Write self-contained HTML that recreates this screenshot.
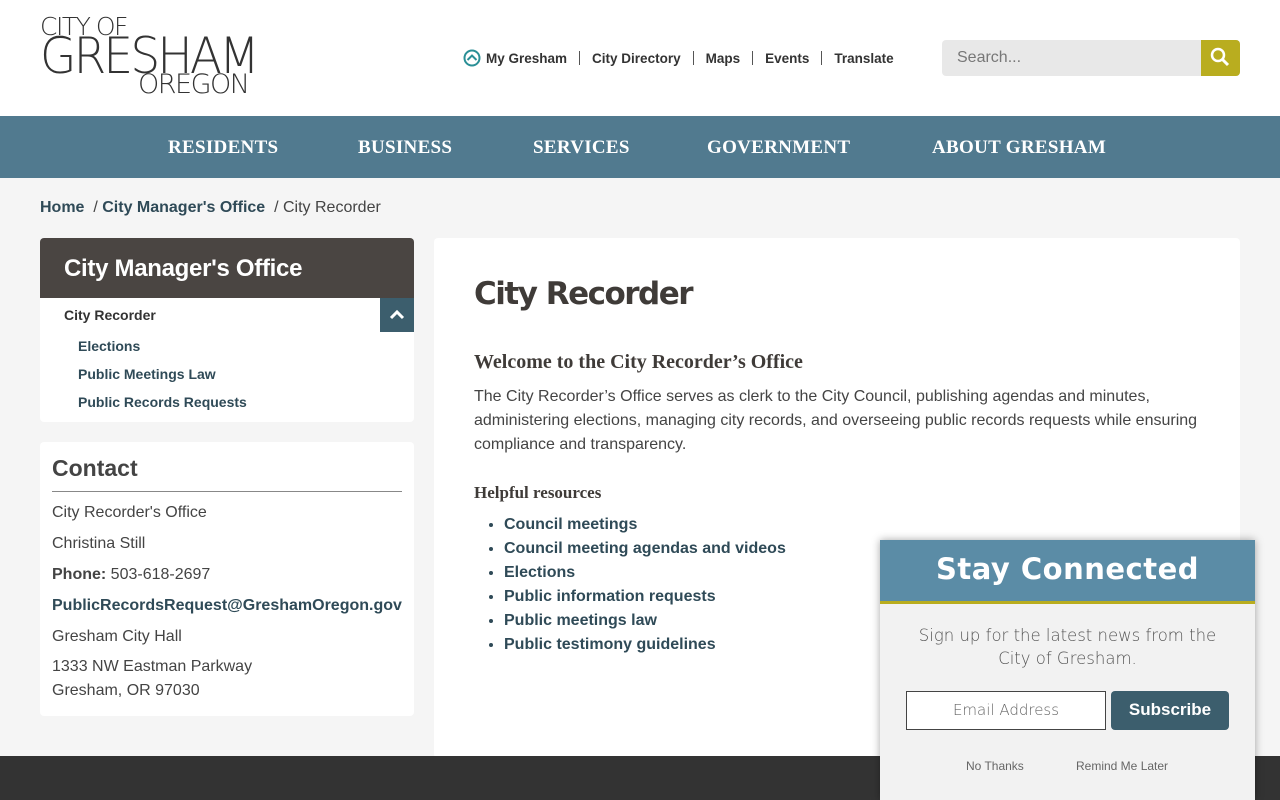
<!DOCTYPE html>
<html><head><meta charset="utf-8"><style>
*{box-sizing:border-box;margin:0;padding:0}
body{width:1280px;height:800px;overflow:hidden;background:#f5f5f5;font-family:"Liberation Sans",Arial,sans-serif;position:relative}
.hdr{position:absolute;left:0;top:0;width:1280px;height:116px;background:#fff}
.logo{position:absolute;left:40px;top:14px;color:#333;font-family:"DejaVu Sans",sans-serif;font-weight:200;line-height:1}
.util{position:absolute;top:49px;left:463px;font-size:13.5px;font-weight:bold;color:#333;display:flex;align-items:center}
.util span.sep{display:inline-block;width:1px;height:14px;background:#555;margin:0 12px}
.search{position:absolute;left:942px;top:40px;width:298px;height:36px;background:#e8e8e8;border-radius:4px;overflow:hidden}
.search span{position:absolute;left:15px;top:9px;font-size:16px;color:#777}
.search .btn{position:absolute;right:0;top:0;width:39px;height:36px;background:#b9ad1f}
.nav{position:absolute;top:116px;left:0;width:1280px;height:62px;background:#517a8f}
.nav a{position:absolute;top:21px;color:#fff;font-family:"Liberation Serif",serif;font-weight:bold;font-size:19px;letter-spacing:.3px}
.bc{position:absolute;top:199px;left:40px;font-size:16px;color:#444}
.bc b{color:#2f4a57}
.side{position:absolute;left:40px;top:238px;width:374px;height:184px;background:#fff;border-radius:4px;overflow:hidden}
.side .t{height:60px;background:#4a4542;color:#fff;font-size:24px;font-weight:bold;padding:17px 24px;font-family:"Liberation Sans",sans-serif;letter-spacing:-.3px}
.side .tog{position:absolute;right:0;top:60px;width:34px;height:34px;background:#3c5e6d}
.side p{position:absolute;font-size:14px;font-weight:bold;color:#2f4a57}
.contact{position:absolute;left:40px;top:442px;width:374px;height:274px;background:#fff;border-radius:4px;padding:0 12px}
.contact h3{font-family:"Liberation Sans",sans-serif;font-size:23px;color:#444;padding-top:13px;padding-bottom:9px;border-bottom:1px solid #888}
.contact p{position:absolute;left:12px;font-size:16px;color:#444}
.main{position:absolute;left:434px;top:238px;width:806px;height:520px;background:#fff;border-radius:4px}
.main h1{position:absolute;left:40px;top:38px;font-family:"DejaVu Sans",sans-serif;font-size:31px;font-weight:bold;color:#3f3b38;letter-spacing:-1.5px}
.main h2{position:absolute;left:40px;top:113px;font-family:"Liberation Serif",serif;font-size:20px;font-weight:bold;color:#3f3b38}
.main .p{position:absolute;left:40px;top:147px;width:740px;font-size:16px;line-height:24px;color:#444}
.main h4{position:absolute;left:40px;top:245px;font-family:"Liberation Serif",serif;font-size:17px;font-weight:bold;color:#3f3b38}
.main ul{position:absolute;left:70px;top:275px;font-size:16px;font-weight:bold;color:#2f4a57;line-height:24px}
.foot{position:absolute;top:756px;left:0;width:1280px;height:44px;background:#333}
.pop{position:absolute;left:880px;top:540px;width:375px;height:260px;background:#f2f2f2;box-shadow:0 0 8px rgba(0,0,0,.35)}
.pop .h{height:64px;background:#5b8ca6;border-bottom:3px solid #b9ad1f;color:#fff;text-align:center;font-family:"DejaVu Sans",sans-serif;font-weight:bold;font-size:29px;padding-top:12px;letter-spacing:.5px}
.pop .s{position:absolute;top:84px;left:0;width:375px;text-align:center;font-family:"DejaVu Sans",sans-serif;font-weight:200;font-size:16.5px;color:#555;line-height:23px;padding:0 22px}
.pop .e{position:absolute;left:26px;top:151px;width:200px;height:39px;background:#fff;border:1px solid #444;text-align:center;font-size:15px;color:#666;padding-top:9px;font-family:"DejaVu Sans",sans-serif;font-weight:200}
.pop .b{position:absolute;left:231px;top:151px;width:118px;height:39px;background:#3c5e6d;border-radius:4px;color:#fff;font-weight:bold;font-size:17px;text-align:center;padding-top:9px;font-family:"Liberation Sans",sans-serif}
.pop .l{position:absolute;top:219px;font-size:12px;color:#666}
</style></head><body>
<div class="hdr">
<div class="logo"><div style="font-size:25px;letter-spacing:-1.5px">CITY OF</div><div style="font-size:50px;letter-spacing:-3px;margin-top:-8px;transform:scaleX(.94);transform-origin:left">GRESHAM</div><div style="font-size:27px;margin-left:98px;margin-top:-10px;letter-spacing:-1.5px">OREGON</div></div>
<div class="util"><svg width="18" height="18" viewBox="0 0 18 18" style="margin-right:5px"><circle cx="9" cy="9" r="7.5" fill="none" stroke="#2a8f96" stroke-width="2"/><path d="M4.5 11 9 6.5 13.5 11" fill="none" stroke="#2a8f96" stroke-width="2"/></svg>My Gresham<span class="sep"></span>City Directory<span class="sep"></span>Maps<span class="sep"></span>Events<span class="sep"></span>Translate</div>
<div class="search"><span>Search...</span><div class="btn"><svg width="39" height="36" viewBox="0 0 39 36"><circle cx="17" cy="15" r="6" fill="none" stroke="#fff" stroke-width="2.5"/><path d="M21.5 19.5 27 25" stroke="#fff" stroke-width="3"/></svg></div></div>
</div>
<div class="nav"><a style="left:168px">RESIDENTS</a><a style="left:358px">BUSINESS</a><a style="left:533px">SERVICES</a><a style="left:707px">GOVERNMENT</a><a style="left:932px">ABOUT GRESHAM</a></div>
<div class="bc"><b>Home</b> &nbsp;/ <b>City Manager's Office</b> &nbsp;/ City Recorder</div>
<div class="side"><div class="t">City Manager's Office</div><div class="tog"><svg width="34" height="34"><path d="M11 20 17 14 23 20" fill="none" stroke="#fff" stroke-width="3"/></svg></div>
<p style="left:24px;top:69px;color:#333">City Recorder</p><p style="left:38px;top:100px">Elections</p><p style="left:38px;top:128px">Public Meetings Law</p><p style="left:38px;top:156px">Public Records Requests</p></div>
<div class="contact"><h3>Contact</h3>
<p style="top:62px">City Recorder's Office</p><p style="top:93px">Christina Still</p><p style="top:124px"><b>Phone:</b> 503-618-2697</p><p style="top:155px;font-weight:bold;color:#2f4a57">PublicRecordsRequest@GreshamOregon.gov</p><p style="top:186px">Gresham City Hall</p><p style="top:217px;line-height:24px;margin-top:-4px">1333 NW Eastman Parkway<br>Gresham, OR 97030</p></div>
<div class="main"><h1>City Recorder</h1><h2>Welcome to the City Recorder’s Office</h2>
<div class="p">The City Recorder’s Office serves as clerk to the City Council, publishing agendas and minutes, administering elections, managing city records, and overseeing public records requests while ensuring compliance and transparency.</div>
<h4>Helpful resources</h4>
<ul><li>Council meetings</li><li>Council meeting agendas and videos</li><li>Elections</li><li>Public information requests</li><li>Public meetings law</li><li>Public testimony guidelines</li></ul></div>
<div class="foot"></div>
<div class="pop"><div class="h">Stay Connected</div><div class="s">Sign up for the latest news from the City of Gresham.</div><div class="e">Email Address</div><div class="b">Subscribe</div><span class="l" style="left:86px">No Thanks</span><span class="l" style="left:196px">Remind Me Later</span></div>
</body></html>
